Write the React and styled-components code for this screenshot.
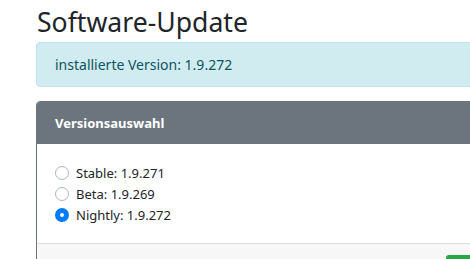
import React, { useState } from 'react';
import styled, { createGlobalStyle } from 'styled-components';

const GlobalStyle = createGlobalStyle`
  html, body {
    margin: 0;
    padding: 0;
    background: #fff;
    overflow: hidden;
  }
  body {
    font-family: 'Noto Sans', 'Open Sans', sans-serif;
    color: #212529;
  }
`;

const Page = styled.div`
  width: 560px;
  padding: 0 0 0 36px;
`;

const Title = styled.h2`
  margin: 0;
  padding: 4px 0 0 1px;
  font-size: 26.6px;
  font-weight: 400;
  line-height: 36px;
  color: #212529;
`;

const Alert = styled.div`
  margin-top: 2px;
  height: 43px;
  padding: 0 18px;
  display: flex;
  align-items: center;
  background-color: #d1ecf1;
  border: 1px solid #bee5eb;
  border-radius: 4px;
  color: #0c5460;
  font-size: 14px;
`;

const Card = styled.section`
  margin-top: 14px;
  border: 1px solid #6c757d;
  border-radius: 4px;
  overflow: hidden;
`;

const CardHeader = styled.header`
  height: 42px;
  padding: 0 18px;
  display: flex;
  align-items: center;
  background-color: #6c757d;
  color: #fff;
  font-size: 13px;
  font-weight: 700;
`;

const CardBody = styled.div`
  padding: 18px 18px 18px;
  display: flex;
  flex-direction: column;
`;

const RadioRow = styled.label`
  display: flex;
  align-items: center;
  height: 21px;
  gap: 7px;
  font-size: 13px;
  cursor: pointer;
`;

const RadioMark = styled.span`
  width: 14px;
  height: 14px;
  box-sizing: border-box;
  border-radius: 50%;
  border: ${({ checked }) => (checked ? '5px solid #007bff' : '1px solid #adb5bd')};
  background: #fff;
  flex-shrink: 0;
`;

const CardFooter = styled.footer`
  height: 40px;
  padding: 11px 18px 0;
  display: flex;
  justify-content: flex-end;
  align-items: flex-start;
  background-color: #f7f7f7;
  border-top: 1px solid #dcdcdc;
`;

const Button = styled.button`
  margin-right: 31px;
  height: 30px;
  width: 100px;
  border: none;
  border-radius: 3px;
  background-color: #28a745;
  color: #fff;
  font: inherit;
`;

const versions = [
  { id: 'stable', label: 'Stable: 1.9.271' },
  { id: 'beta', label: 'Beta: 1.9.269' },
  { id: 'nightly', label: 'Nightly: 1.9.272' },
];

const App = () => {
  const [selected, setSelected] = useState('nightly');

  return (
    <Page>
      <GlobalStyle />
      <Title>Software-Update</Title>
      <Alert>installierte Version: 1.9.272</Alert>

      <Card>
        <CardHeader>Versionsauswahl</CardHeader>
        <CardBody>
          {versions.map(version => (
            <RadioRow key={version.id} onClick={() => setSelected(version.id)}>
              <RadioMark checked={selected === version.id} />
              {version.label}
            </RadioRow>
          ))}
        </CardBody>
        <CardFooter>
          <Button>Update</Button>
        </CardFooter>
      </Card>
    </Page>
  );
};

export default App;
